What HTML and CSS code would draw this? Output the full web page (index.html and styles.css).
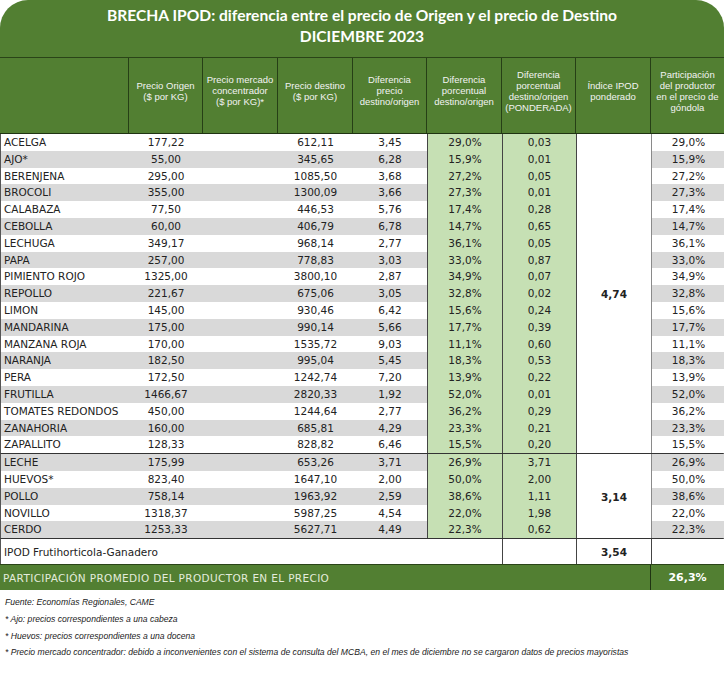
FILE: index.html
```html
<!DOCTYPE html>
<html lang="es">
<head>
<meta charset="utf-8">
<title>Brecha IPOD</title>
<link rel="stylesheet" href="styles.css">
</head>
<body>
<div class="sheet">
  <div class="title">
    <div>BRECHA IPOD: diferencia entre el precio de Origen y el precio de Destino</div>
    <div>DICIEMBRE 2023</div>
  </div>
  <div class="grid hdr">
    <div class="h first"></div>
    <div class="h">Precio Origen<br>($ por KG)</div>
    <div class="h">Precio mercado<br>concentrador<br>($ por KG)*</div>
    <div class="h">Precio destino<br>($ por KG)</div>
    <div class="h">Diferencia<br>precio<br>destino/origen</div>
    <div class="h">Diferencia<br>porcentual<br>destino/origen</div>
    <div class="h">Diferencia<br>porcentual<br>destino/origen<br>(PONDERADA)</div>
    <div class="h">Índice IPOD<br>ponderado</div>
    <div class="h">Participación<br>del productor<br>en el precio de<br>góndola</div>
  </div>

  <div class="grid grp">
    <div class="ipod span19"><b>4,74</b></div>
    <div class="row"><div class="c name">ACELGA</div><div class="c">177,22</div><div class="c"></div><div class="c">612,11</div><div class="c">3,45</div><div class="c lg l1">29,0%</div><div class="c lg l2">0,03</div><div class="c last">29,0%</div></div>
    <div class="row g"><div class="c name">AJO*</div><div class="c">55,00</div><div class="c"></div><div class="c">345,65</div><div class="c">6,28</div><div class="c lg l1">15,9%</div><div class="c lg l2">0,01</div><div class="c last">15,9%</div></div>
    <div class="row"><div class="c name">BERENJENA</div><div class="c">295,00</div><div class="c"></div><div class="c">1085,50</div><div class="c">3,68</div><div class="c lg l1">27,2%</div><div class="c lg l2">0,05</div><div class="c last">27,2%</div></div>
    <div class="row g"><div class="c name">BROCOLI</div><div class="c">355,00</div><div class="c"></div><div class="c">1300,09</div><div class="c">3,66</div><div class="c lg l1">27,3%</div><div class="c lg l2">0,01</div><div class="c last">27,3%</div></div>
    <div class="row"><div class="c name">CALABAZA</div><div class="c">77,50</div><div class="c"></div><div class="c">446,53</div><div class="c">5,76</div><div class="c lg l1">17,4%</div><div class="c lg l2">0,28</div><div class="c last">17,4%</div></div>
    <div class="row g"><div class="c name">CEBOLLA</div><div class="c">60,00</div><div class="c"></div><div class="c">406,79</div><div class="c">6,78</div><div class="c lg l1">14,7%</div><div class="c lg l2">0,65</div><div class="c last">14,7%</div></div>
    <div class="row"><div class="c name">LECHUGA</div><div class="c">349,17</div><div class="c"></div><div class="c">968,14</div><div class="c">2,77</div><div class="c lg l1">36,1%</div><div class="c lg l2">0,05</div><div class="c last">36,1%</div></div>
    <div class="row g"><div class="c name">PAPA</div><div class="c">257,00</div><div class="c"></div><div class="c">778,83</div><div class="c">3,03</div><div class="c lg l1">33,0%</div><div class="c lg l2">0,87</div><div class="c last">33,0%</div></div>
    <div class="row"><div class="c name">PIMIENTO ROJO</div><div class="c">1325,00</div><div class="c"></div><div class="c">3800,10</div><div class="c">2,87</div><div class="c lg l1">34,9%</div><div class="c lg l2">0,07</div><div class="c last">34,9%</div></div>
    <div class="row g"><div class="c name">REPOLLO</div><div class="c">221,67</div><div class="c"></div><div class="c">675,06</div><div class="c">3,05</div><div class="c lg l1">32,8%</div><div class="c lg l2">0,02</div><div class="c last">32,8%</div></div>
    <div class="row"><div class="c name">LIMON</div><div class="c">145,00</div><div class="c"></div><div class="c">930,46</div><div class="c">6,42</div><div class="c lg l1">15,6%</div><div class="c lg l2">0,24</div><div class="c last">15,6%</div></div>
    <div class="row g"><div class="c name">MANDARINA</div><div class="c">175,00</div><div class="c"></div><div class="c">990,14</div><div class="c">5,66</div><div class="c lg l1">17,7%</div><div class="c lg l2">0,39</div><div class="c last">17,7%</div></div>
    <div class="row"><div class="c name">MANZANA ROJA</div><div class="c">170,00</div><div class="c"></div><div class="c">1535,72</div><div class="c">9,03</div><div class="c lg l1">11,1%</div><div class="c lg l2">0,60</div><div class="c last">11,1%</div></div>
    <div class="row g"><div class="c name">NARANJA</div><div class="c">182,50</div><div class="c"></div><div class="c">995,04</div><div class="c">5,45</div><div class="c lg l1">18,3%</div><div class="c lg l2">0,53</div><div class="c last">18,3%</div></div>
    <div class="row"><div class="c name">PERA</div><div class="c">172,50</div><div class="c"></div><div class="c">1242,74</div><div class="c">7,20</div><div class="c lg l1">13,9%</div><div class="c lg l2">0,22</div><div class="c last">13,9%</div></div>
    <div class="row g"><div class="c name">FRUTILLA</div><div class="c">1466,67</div><div class="c"></div><div class="c">2820,33</div><div class="c">1,92</div><div class="c lg l1">52,0%</div><div class="c lg l2">0,01</div><div class="c last">52,0%</div></div>
    <div class="row"><div class="c name">TOMATES REDONDOS</div><div class="c">450,00</div><div class="c"></div><div class="c">1244,64</div><div class="c">2,77</div><div class="c lg l1">36,2%</div><div class="c lg l2">0,29</div><div class="c last">36,2%</div></div>
    <div class="row g"><div class="c name">ZANAHORIA</div><div class="c">160,00</div><div class="c"></div><div class="c">685,81</div><div class="c">4,29</div><div class="c lg l1">23,3%</div><div class="c lg l2">0,21</div><div class="c last">23,3%</div></div>
    <div class="row"><div class="c name">ZAPALLITO</div><div class="c">128,33</div><div class="c"></div><div class="c">828,82</div><div class="c">6,46</div><div class="c lg l1">15,5%</div><div class="c lg l2">0,20</div><div class="c last">15,5%</div></div>
  </div>

  <div class="grid grp sep">
    <div class="ipod span5"><b>3,14</b></div>
    <div class="row g"><div class="c name">LECHE</div><div class="c">175,99</div><div class="c"></div><div class="c">653,26</div><div class="c">3,71</div><div class="c lg l1">26,9%</div><div class="c lg l2">3,71</div><div class="c last">26,9%</div></div>
    <div class="row"><div class="c name">HUEVOS*</div><div class="c">823,40</div><div class="c"></div><div class="c">1647,10</div><div class="c">2,00</div><div class="c lg l1">50,0%</div><div class="c lg l2">2,00</div><div class="c last">50,0%</div></div>
    <div class="row g"><div class="c name">POLLO</div><div class="c">758,14</div><div class="c"></div><div class="c">1963,92</div><div class="c">2,59</div><div class="c lg l1">38,6%</div><div class="c lg l2">1,11</div><div class="c last">38,6%</div></div>
    <div class="row"><div class="c name">NOVILLO</div><div class="c">1318,37</div><div class="c"></div><div class="c">5987,25</div><div class="c">4,54</div><div class="c lg l1">22,0%</div><div class="c lg l2">1,98</div><div class="c last">22,0%</div></div>
    <div class="row g"><div class="c name">CERDO</div><div class="c">1253,33</div><div class="c"></div><div class="c">5627,71</div><div class="c">4,49</div><div class="c lg l1">22,3%</div><div class="c lg l2">0,62</div><div class="c last">22,3%</div></div>
  </div>

  <div class="grid total">
    <div class="t label">IPOD Frutihorticola-Ganadero</div>
    <div class="t bl"></div>
    <div class="t bl"><b>3,54</b></div>
    <div class="t bl"></div>
  </div>

  <div class="avg">
    <div class="avg-label">PARTICIPACIÓN PROMEDIO DEL PRODUCTOR EN EL PRECIO</div>
    <div class="avg-val">26,3%</div>
  </div>

  <div class="notes">
    <p>Fuente: Economías Regionales, CAME</p>
    <p>* Ajo: precios correspondientes a una cabeza</p>
    <p>* Huevos: precios correspondientes a una docena</p>
    <p>* Precio mercado concentrador: debido a inconvenientes con el sistema de consulta del MCBA, en el mes de diciembre no se cargaron datos de precios mayoristas</p>
  </div>
</div>
</body>
</html>
```

FILE: styles.css
```css
* { box-sizing: border-box; }

html, body {
  margin: 0;
  padding: 0;
  background: #ffffff;
}

.sheet {
  width: 724px;
}

.title {
  height: 57px;
  background: #527f32;
  border-radius: 28px 28px 0 0;
  color: #ffffff;
  font-family: Lato, "Open Sans", sans-serif;
  font-weight: 700;
  font-size: 15.6px;
  line-height: 20.5px;
  text-align: center;
  padding-top: 5px;
}

.grid {
  display: grid;
  grid-template-columns: 128px 74px 75px 75px 74px 75px 74px 75px 74px;
}

.hdr {
  background: #527f32;
  border-top: 1px solid #2a4418;
  border-bottom: 1px solid #1f3312;
}

.h {
  height: 75px;
  display: flex;
  align-items: center;
  justify-content: center;
  text-align: center;
  padding-bottom: 10px;
  font-family: "Liberation Sans", Arial, sans-serif;
  font-size: 9.5px;
  line-height: 11px;
  color: #f3f3f3;
  border-left: 1px solid #263f16;
}

.h.first {
  border-left: none;
}

.grp {
  grid-auto-rows: 16.8px;
  border-left: 1px solid #555555;
  border-right: 1px solid #888888;
}

.sep {
  border-top: 1px solid #333333;
}

.row {
  display: contents;
}

.c {
  font-family: "DejaVu Sans", Verdana, sans-serif;
  font-size: 10.5px;
  line-height: 16.8px;
  color: #222222;
  text-align: center;
  white-space: nowrap;
  background: #ffffff;
}

.c.name {
  text-align: left;
  padding-left: 3px;
}

.row.g .c {
  background: #d9d9d9;
}

.c.lg,
.row.g .c.lg {
  background: #c6e0b4;
}

.c.l1 {
  border-left: 1px solid #444444;
}

.c.l2 {
  border-left: 1px solid #444444;
}

.c.last {
  border-left: 1px solid #8a8a8a;
}

.ipod {
  grid-column: 8;
  display: flex;
  align-items: center;
  justify-content: center;
  background: #ffffff;
  border-left: 1px solid #444444;
  font-family: "DejaVu Sans", Verdana, sans-serif;
  font-size: 10.5px;
  color: #222222;
  padding-top: 1px;
}

.span19 {
  grid-row: 1 / span 19;
}

.span5 {
  grid-row: 1 / span 5;
}

.total {
  height: 26px;
  border-top: 1px solid #333333;
  border-left: 1px solid #555555;
  border-right: 1px solid #888888;
}

.t {
  font-family: "DejaVu Sans", Verdana, sans-serif;
  font-size: 10.5px;
  color: #222222;
  display: flex;
  align-items: center;
  justify-content: center;
  background: #ffffff;
}

.t.label {
  grid-column: 1 / span 6;
  justify-content: flex-start;
  padding-left: 3px;
}

.t.bl {
  border-left: 1px solid #444444;
}

.avg {
  display: grid;
  grid-template-columns: 650px 74px;
  height: 26px;
  background: #527f32;
  border-top: 1px solid #2a4418;
}

.avg-label {
  display: flex;
  align-items: center;
  padding-left: 3px;
  font-family: "DejaVu Sans", Verdana, sans-serif;
  font-size: 10.5px;
  letter-spacing: 0.35px;
  color: #e4ecdc;
}

.avg-val {
  display: flex;
  align-items: center;
  justify-content: center;
  border-left: 1px solid #1f3312;
  font-family: "DejaVu Sans", Verdana, sans-serif;
  font-weight: 700;
  font-size: 11px;
  color: #ffffff;
}

.notes {
  padding: 4px 0 0 5px;
}

.notes p {
  margin: 0;
  font-family: "Liberation Sans", Arial, sans-serif;
  font-style: italic;
  font-size: 8.6px;
  line-height: 16.7px;
  color: #222222;
  white-space: nowrap;
}
```
